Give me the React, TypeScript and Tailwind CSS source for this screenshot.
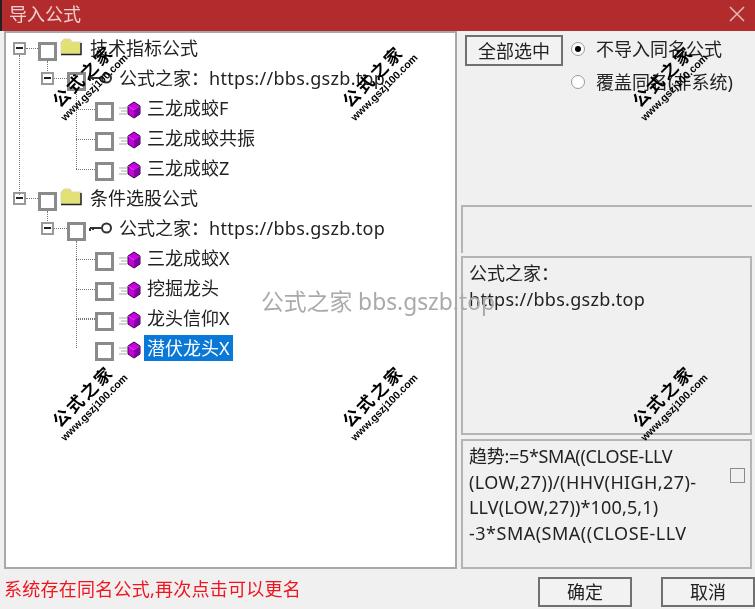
import React from "react";

const FONT = "font-['Noto_Sans','Noto_Sans_CJK_SC',sans-serif]";

function Expander() {
  return (
    <span className="flex h-[13px] w-[13px] shrink-0 items-center justify-center border-2 border-[#999] bg-white">
      <span className="h-[2px] w-[7px] bg-[#222]" />
    </span>
  );
}

function Check() {
  return <span className="mt-[6px] block h-[19px] w-[19px] shrink-0 border-[3px] border-[#8b8b8b] bg-white" />;
}

function Folder() {
  return (
    <svg width="22" height="18" viewBox="0 0 22 18" className="mb-[3px] shrink-0">
      <path d="M1 16V4l3-3h6l2 3h9v12z" fill="#e2e274" stroke="#d8d8c0" />
      <path d="M1 16.5h20V5" fill="none" stroke="#222" strokeWidth="1.5" />
    </svg>
  );
}

function KeyIcon() {
  return (
    <svg width="23" height="12" viewBox="0 0 23 12" className="shrink-0">
      <circle cx="17.5" cy="6" r="4.5" fill="#fff" stroke="#333" strokeWidth="2" />
      <path d="M12 6H1M1 6v3M4 6v2" fill="none" stroke="#333" strokeWidth="2" />
    </svg>
  );
}

function Gem() {
  return (
    <svg width="23" height="18" viewBox="0 0 23 18" className="mt-[3px] shrink-0">
      <path d="M1 7h8M3 10h6M1 13h8" stroke="#aaa" strokeWidth="1" />
      <path d="M16 1l6 4v8l-6 4-6-4V5z" fill="#c800e0" stroke="#300040" strokeWidth="1" />
      <path d="M10 5l6 4 6-4" fill="none" stroke="#e040f8" strokeWidth="1" />
      <path d="M16 9v8l6-4V5z" fill="#8000a0" />
    </svg>
  );
}

function Group({ top, icon, leaves, selected }: { top: string; icon: React.ReactNode; leaves: string[]; selected?: string }) {
  return (
    <>
      <div className="flex h-[30px] items-center pl-[7px]">
        <Expander />
        <span className="ml-[12px]"><Check /></span>
        <span className="ml-[3px]"><Folder /></span>
        <span className="ml-[8px] whitespace-nowrap">{top}</span>
      </div>
      <div className="flex h-[30px] items-center pl-[35px]">
        <Expander />
        <span className="ml-[13px]"><Check /></span>
        <span className="ml-[3px]">{icon}</span>
        <span className="ml-[7px] whitespace-nowrap">公式之家：<span className="tracking-[0.3px]">https://bbs.gszb.top</span></span>
      </div>
      {leaves.map((l) => (
        <div key={l} className="flex h-[30px] items-center pl-[89px]">
          <Check />
          <span className="ml-[4px]"><Gem /></span>
          <span className={l === selected ? "ml-[3px] whitespace-nowrap bg-[#0a78d7] px-[3px] text-white" : "ml-[6px] whitespace-nowrap"}>{l}</span>
        </div>
      ))}
    </>
  );
}

const vDots = "absolute w-0 border-l border-dotted border-[#777]";
const hDots = "absolute h-0 border-t border-dotted border-[#777]";

function Connectors({ offset }: { offset: number }) {
  const t = (y: number) => ({ top: y - 34 + offset });
  return (
    <>
      <span className={`${hDots} left-[20px] w-[12px]`} style={t(49)} />
      <span className={`${hDots} left-[48px] w-[13px]`} style={t(79)} />
      <span className={`${vDots} left-[41px] h-[10px]`} style={t(62)} />
      <span className={`${vDots} left-[70px] h-[78px]`} style={t(92)} />
      <span className={`${hDots} left-[70px] w-[19px]`} style={t(110)} />
      <span className={`${hDots} left-[70px] w-[19px]`} style={t(140)} />
      <span className={`${hDots} left-[70px] w-[19px]`} style={t(170)} />
    </>
  );
}

function Mark({ className }: { className: string }) {
  return (
    <div className={`pointer-events-none absolute flex w-[120px] -rotate-45 flex-col items-center leading-none text-black ${className}`}>
      <span className="whitespace-nowrap text-[17px] font-bold tracking-[2.5px] font-['Noto_Sans_CJK_SC',serif]">公式之家</span>
      <span className="mt-[3px] whitespace-nowrap text-[10.5px] font-bold font-['Liberation_Sans',sans-serif]">www.gszj100.com</span>
    </div>
  );
}

function PushButton({ label, className }: { label: string; className: string }) {
  return (
    <button className={`flex items-center justify-center border-2 border-[#707070] bg-[#f2f2f2] text-[18px] text-[#222] ${className}`}>
      {label}
    </button>
  );
}

function Radio({ on, label, className }: { on?: boolean; label: string; className: string }) {
  return (
    <div className={`flex items-center ${className}`}>
      <span className="flex h-[14px] w-[14px] items-center justify-center rounded-full border border-[#999] bg-white">
        {on && <span className="h-[6px] w-[6px] rounded-full bg-black" />}
      </span>
      <span className="ml-[11px] whitespace-nowrap">{label}</span>
    </div>
  );
}

export default function App() {
  return (
    <div className={`relative flex h-[609px] w-[755px] flex-col overflow-hidden bg-[#f0f0f0] pl-[2px] text-[18px] leading-[26px] text-[#222] blur-[0.4px] ${FONT}`}>
      <div className="-ml-[2px] flex h-[31px] shrink-0 items-center justify-between border-l-2 border-[#222] bg-[#b22c2e] pb-[4px] pl-[7px] pr-[9px] text-[#f2d0d0]">
        <span>导入公式</span>
        <svg width="18" height="18" viewBox="0 0 18 18"><path d="M2 2l14 14M16 2L2 16" stroke="#e8b8b8" strokeWidth="1.5" /></svg>
      </div>

      <div className="flex h-[538px] shrink-0 pl-[2px] pr-[3px]">
        <div className="relative h-full w-[453px] shrink-0 border-2 border-[#a8a8a8] bg-white">
          <Group top="技术指标公式" icon={<KeyIcon />} leaves={["三龙成蛟F", "三龙成蛟共振", "三龙成蛟Z"]} />
          <Group top="条件选股公式" icon={<KeyIcon />} leaves={["三龙成蛟X", "挖掘龙头", "龙头信仰X", "潜伏龙头X"]} selected="潜伏龙头X" />
          <Connectors offset={0} />
          <Connectors offset={150} />
          <span className={`${vDots} left-[13px] top-[22px] h-[140px]`} />
          <span className={`${hDots} left-[70px] top-[285px] w-[19px]`} />
          <span className={`${vDots} left-[70px] top-[285px] h-[30px]`} />
        </div>

        <div className="ml-[4px] flex flex-1 flex-col">
          <div className="flex h-[174px] shrink-0 items-start pl-[4px] pt-[4px]">
            <PushButton label="全部选中" className="h-[31px] w-[98px]" />
            <div className="ml-[8px] flex flex-col">
              <Radio on label="不导入同名公式" className="mt-[1px] h-[26px]" />
              <Radio label="覆盖同名(非系统)" className="mt-[7px] h-[26px]" />
            </div>
          </div>
          <div className="h-[48px] shrink-0 border-l-2 border-t-2 border-[#b4b4b4]" />
          <div className="mt-[3px] h-[179px] shrink-0 border-2 border-[#b4b4b4] px-[6px] pt-[2px]">
            <div className="leading-[26px]">公式之家：</div>
            <div className="leading-[26px] tracking-[0.3px]">https://bbs.gszb.top</div>
          </div>
          <div className="mt-[4px] flex h-[130px] shrink-0 border-2 border-[#b4b4b4] pl-[6px] pt-[3px]">
            <div className="w-[250px] shrink-0 leading-[25.5px]">
              <div className="whitespace-nowrap tracking-[-0.3px]">趋势:=5*SMA((CLOSE-LLV</div>
              <div className="whitespace-nowrap tracking-[0.4px]">(LOW,27))/(HHV(HIGH,27)-</div>
              <div className="whitespace-nowrap tracking-[0.15px]">LLV(LOW,27))*100,5,1)</div>
              <div className="whitespace-nowrap tracking-[0.5px]">-3*SMA(SMA((CLOSE-LLV</div>
            </div>
            <span className="ml-[11px] mt-[24px] block h-[15px] w-[15px] border border-[#8a8a8a]" />
          </div>
        </div>
      </div>

      <div className="flex h-[40px] items-center pl-[2px]">
        <span className="w-[296px] shrink-0 whitespace-nowrap tracking-[0.25px] text-[#f0141e]">系统存在同名公式,再次点击可以更名</span>
        <PushButton label="确定" className="ml-[238px] mt-[5px] h-[30px] w-[94px]" />
        <PushButton label="取消" className="ml-[29px] mt-[5px] h-[30px] w-[94px]" />
      </div>

      <div className="pointer-events-none absolute left-[261px] top-[289px] whitespace-nowrap text-[22.8px] text-[#aaa]">公式之家 bbs.gszb.top</div>
      <Mark className="left-[27px] top-[65px]" />
      <Mark className="left-[317px] top-[65px]" />
      <Mark className="left-[607px] top-[65px]" />
      <Mark className="left-[27px] top-[385px]" />
      <Mark className="left-[317px] top-[385px]" />
      <Mark className="left-[607px] top-[385px]" />
    </div>
  );
}
